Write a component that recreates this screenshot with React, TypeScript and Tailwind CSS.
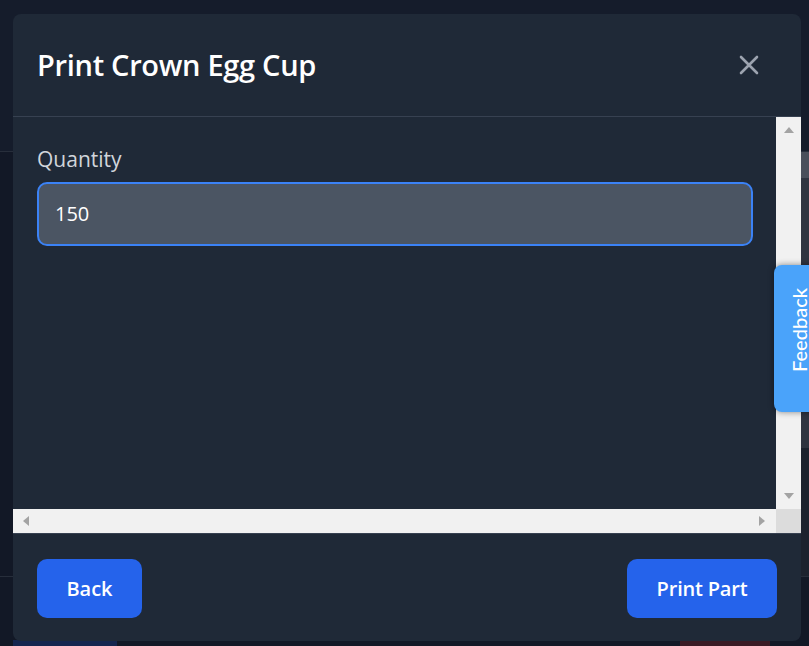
import React from 'react';

const font = { fontFamily: '"Open Sans", "Noto Sans", sans-serif' };

const Triangle: React.FC<{ dir: 'up' | 'down' | 'left' | 'right' }> = ({ dir }) => {
  const pts = {
    up: '0,6 5,0 10,6',
    down: '0,0 10,0 5,6',
    left: '6,0 6,10 0,5',
    right: '0,0 0,10 6,5',
  }[dir];
  const vertical = dir === 'up' || dir === 'down';
  return (
    <svg width={vertical ? 10 : 6} height={vertical ? 6 : 10} viewBox={vertical ? '0 0 10 6' : '0 0 6 10'}>
      <polygon points={pts} fill="#a3a3a3" />
    </svg>
  );
};

const App: React.FC = () => {
  return (
    <div className="relative w-[809px] h-[646px] overflow-hidden bg-[#121826]" style={font}>
      {/* dimmed page behind the dialog */}
      <div className="flex flex-col h-full">
        <div className="h-[152px] bg-[#151c2b] border-b border-[#272e3b]" />
        <div className="h-[425px] flex justify-end border-b border-[#272e3b]">
          <div className="w-[8px] flex flex-col">
            <div className="h-[26px] bg-[#4a4f5b]" />
            <div className="h-[270px] bg-[#2f3440]" />
            <div className="flex-1 bg-[#1c222e]" />
          </div>
        </div>
        <div className="flex-1 flex items-end">
          <div className="ml-[13px] w-[104px] h-[6px] bg-[#15254f]" />
          <div className="ml-auto mr-[39px] w-[90px] h-[6px] bg-[#3a1a24]" />
        </div>
      </div>

      {/* dialog */}
      <div className="absolute left-[13px] top-[14px] w-[788px] h-[627px] rounded-lg bg-[#1f2937] flex flex-col overflow-hidden">
        <div className="h-[103px] shrink-0 flex items-center justify-between pl-[24px] pr-[42px] border-b border-[#374151]">
          <h2 className="text-[29px] font-semibold text-white tracking-[-0.3px]">Print Crown Egg Cup</h2>
          <button className="text-[#9ca3af]">
            <svg width="20" height="20" viewBox="0 0 20 20" fill="none" stroke="currentColor" strokeWidth="2.6" strokeLinecap="round">
              <path d="M2 2L18 18M18 2L2 18" />
            </svg>
          </button>
        </div>

        <div className="h-[416px] shrink-0 flex flex-col">
          <div className="flex-1 flex">
            <div className="flex-1 pl-[24px] pr-[23px] pt-[28px]">
              <label className="block text-[21px] font-medium text-[#d1d5db] leading-[28px]">Quantity</label>
              <div className="mt-[9px] h-[64px] rounded-[10px] border-2 border-[#3b82f6] bg-[#4b5563] flex items-center pl-[16px] text-[20px] text-white">
                150
              </div>
            </div>
            <div className="w-[25px] bg-[#f1f1f1] flex flex-col items-center justify-between pt-[10px] pb-[10px]">
              <Triangle dir="up" />
              <Triangle dir="down" />
            </div>
          </div>
          <div className="h-[24px] flex">
            <div className="flex-1 bg-[#f1f1f1] flex items-center justify-between pl-[10px] pr-[11px]">
              <Triangle dir="left" />
              <Triangle dir="right" />
            </div>
            <div className="w-[25px] bg-[#dcdcdc]" />
          </div>
        </div>

        <div className="flex-1 border-t border-[#374151] flex items-start justify-between pt-[25px] px-[24px]">
          <button className="w-[105px] h-[59px] rounded-[10px] bg-[#2563eb] text-white text-[20px] font-semibold">Back</button>
          <button className="w-[150px] h-[59px] rounded-[10px] bg-[#2563eb] text-white text-[20px] font-semibold tracking-[-0.2px]">Print Part</button>
        </div>
      </div>

      {/* feedback tab */}
      <div className="absolute left-[774px] top-[265px] w-[50px] h-[147px] rounded-l-lg bg-[#4aa3fa] shadow-[0_0_6px_rgba(0,0,0,0.45)] flex items-start pl-[15px] pt-[23px]">
        <span className="[writing-mode:vertical-rl] rotate-180 text-white text-[20px] font-medium leading-[20px]" style={{ fontFamily: 'Lato, "Open Sans", sans-serif' }}>
          Feedback
        </span>
      </div>
    </div>
  );
};

export default App;
